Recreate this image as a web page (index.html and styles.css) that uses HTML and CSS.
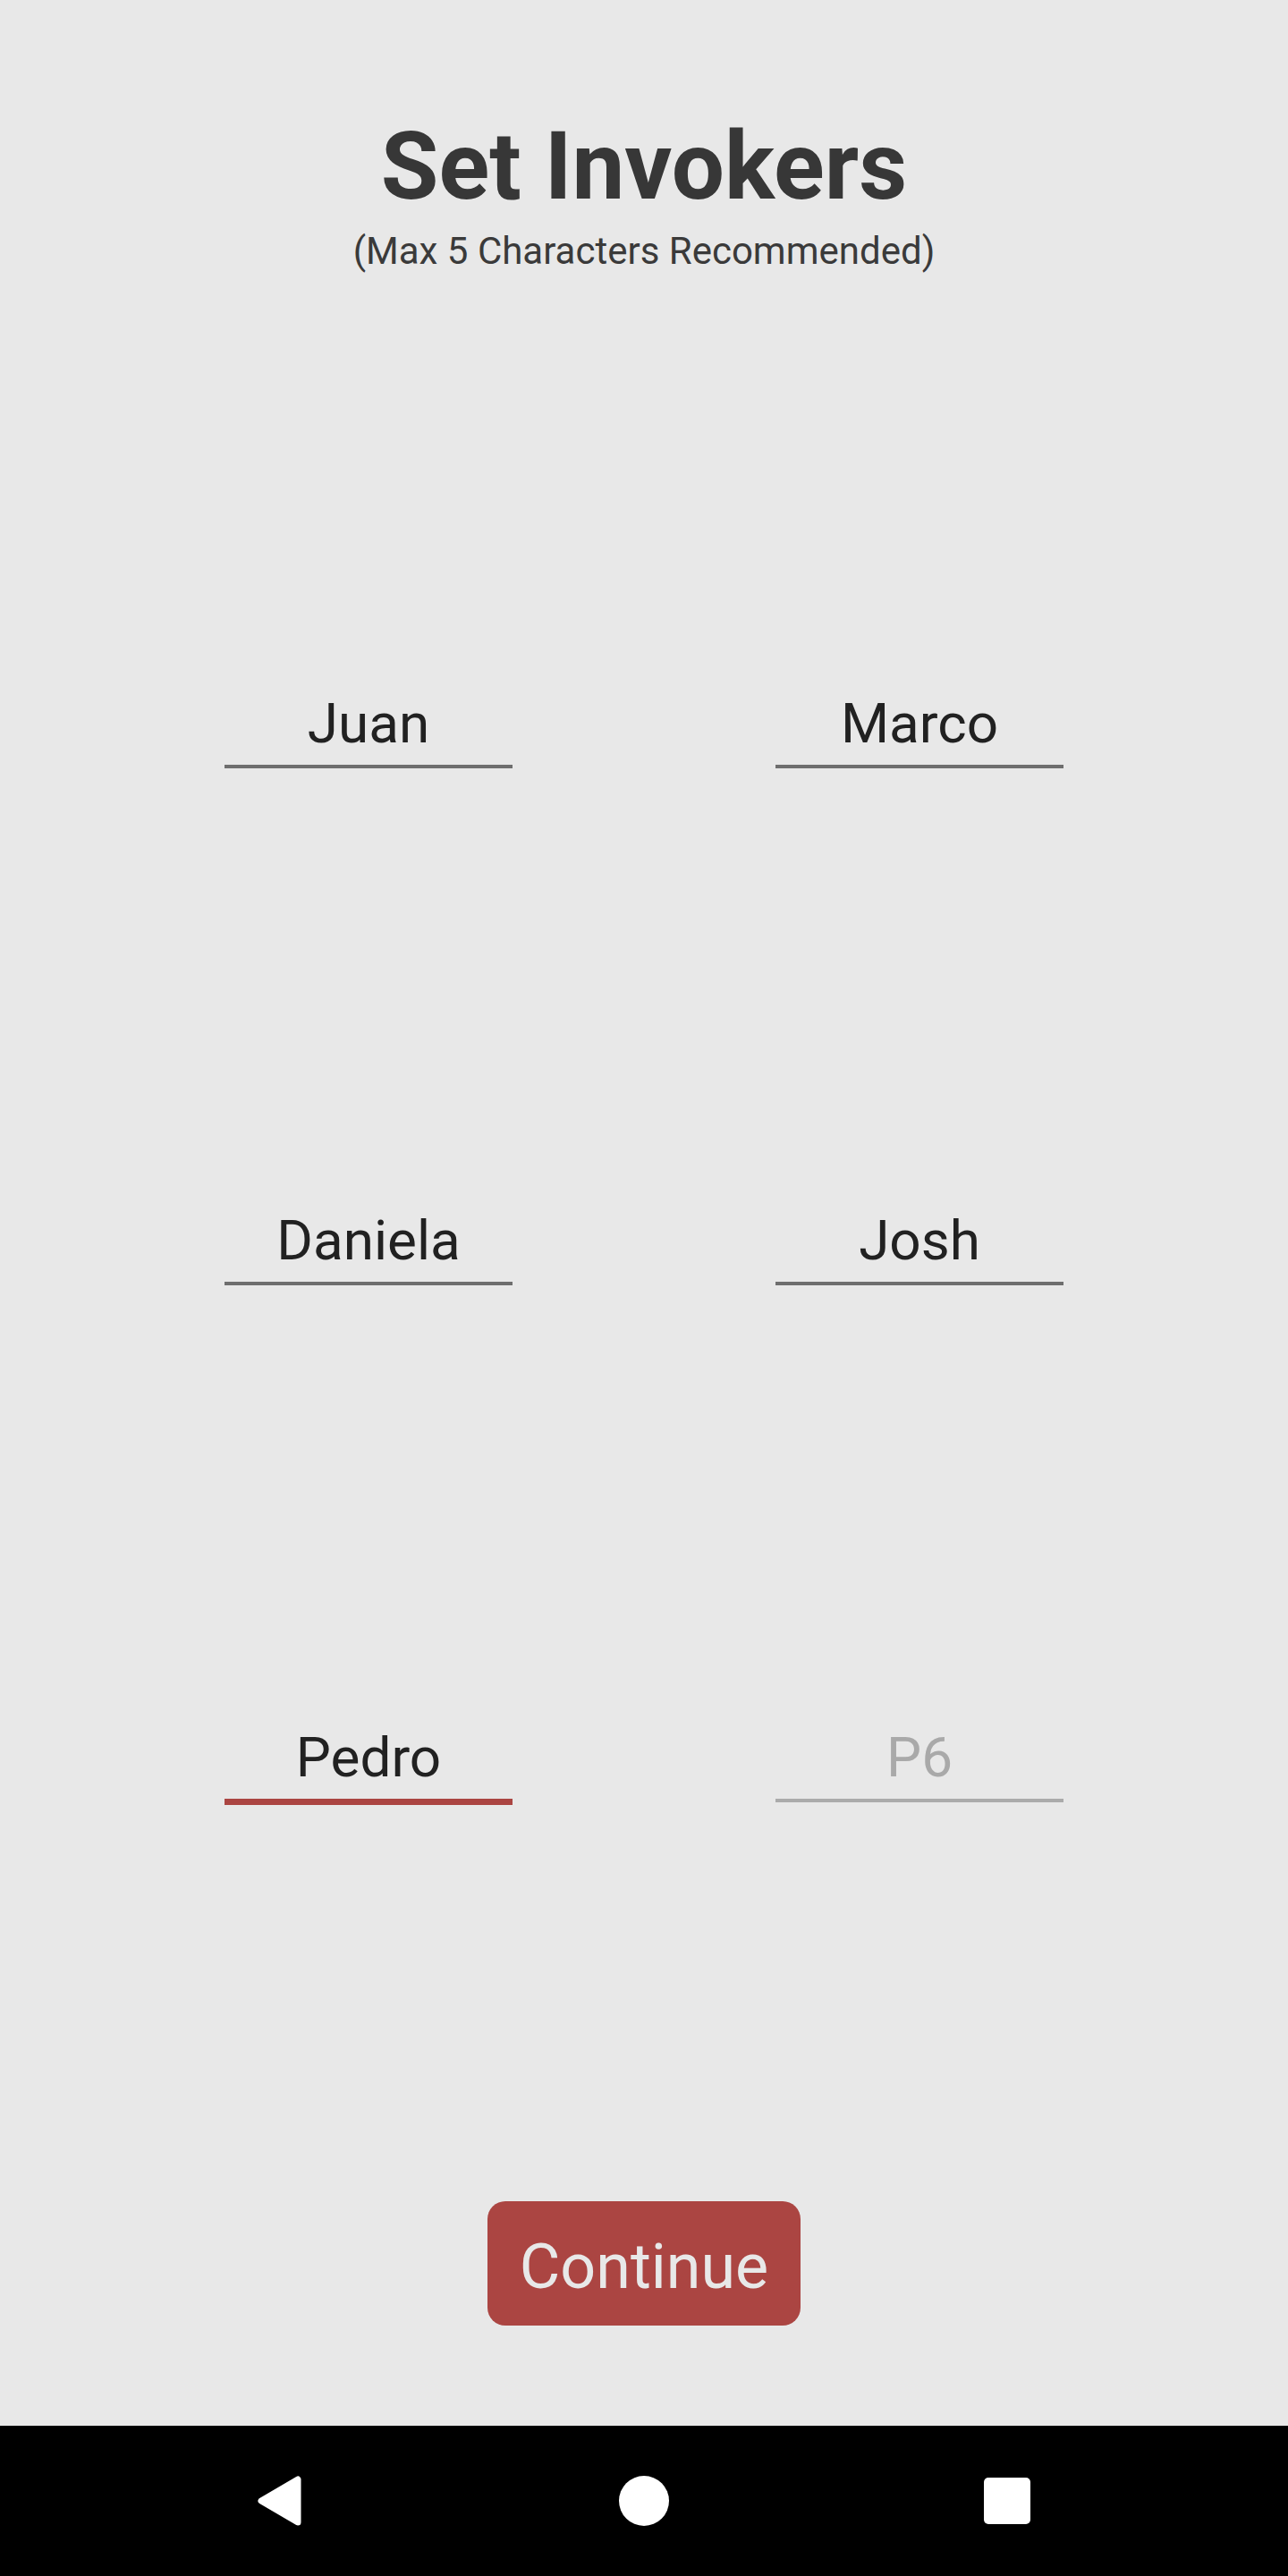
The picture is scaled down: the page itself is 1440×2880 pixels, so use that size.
FILE: index.html
```html
<!DOCTYPE html>
<html lang="en">
<head>
<meta charset="utf-8">
<title>Set Invokers</title>
<link rel="stylesheet" href="styles.css">
</head>
<body>
<div class="screen">
  <main class="content">
    <header class="header">
      <h1 class="title">Set Invokers</h1>
      <p class="subtitle">(Max 5 Characters Recommended)</p>
    </header>
    <section class="fields">
      <div class="field"><span class="value">Juan</span></div>
      <div class="field"><span class="value">Marco</span></div>
      <div class="field"><span class="value">Daniela</span></div>
      <div class="field"><span class="value">Josh</span></div>
      <div class="field field-focused"><span class="value">Pedro</span></div>
      <div class="field field-empty"><span class="value placeholder">P6</span></div>
    </section>
    <div class="actions">
      <button class="continue-btn" type="button">Continue</button>
    </div>
  </main>
  <nav class="navbar">
    <div class="nav-slot">
      <svg class="nav-back" width="50" height="56" viewBox="0 0 50 56">
        <polygon points="5,28 46,4 46,52" fill="#fff" stroke="#fff" stroke-width="7" stroke-linejoin="round"/>
      </svg>
    </div>
    <div class="nav-slot">
      <span class="nav-home"></span>
    </div>
    <div class="nav-slot">
      <span class="nav-recents"></span>
    </div>
  </nav>
</div>
</body>
</html>
```

FILE: styles.css
```css
html, body {
  margin: 0;
  padding: 0;
}

body {
  background: #e8e8e8;
  font-family: Roboto, "Noto Sans", "Liberation Sans", sans-serif;
}

.screen {
  width: 1440px;
  height: 2880px;
  display: flex;
  flex-direction: column;
}

.content {
  flex: 1;
  display: flex;
  flex-direction: column;
  align-items: center;
}

.header {
  padding-top: 127px;
  text-align: center;
}

.title {
  margin: 0;
  font-size: 105px;
  line-height: 120px;
  font-weight: 700;
  color: #373737;
}

.subtitle {
  margin: 10px 0 0;
  font-size: 42px;
  line-height: 48px;
  font-weight: 400;
  color: #3a3a3a;
}

.fields {
  margin-top: 468px;
  display: grid;
  grid-template-columns: 322px 322px;
  column-gap: 294px;
  row-gap: 492px;
}

.field {
  height: 86px;
  box-sizing: border-box;
  padding-bottom: 10px;
  border-bottom: 4px solid #6e6e6e;
  text-align: center;
}

.field-focused {
  border-bottom: 7px solid #ab4542;
  height: 89px;
  margin-bottom: -3px;
}

.field-empty {
  border-bottom-color: #ababab;
}

.value {
  display: block;
  font-size: 62px;
  line-height: 72px;
  color: #212121;
}

.placeholder {
  color: #a9a9a9;
}

.actions {
  margin-top: 446px;
}

.continue-btn {
  width: 350px;
  height: 139px;
  box-sizing: border-box;
  padding: 8px 0 0;
  border: none;
  border-radius: 20px;
  background: #ab4542;
  color: #e8e8e8;
  font-family: Roboto, "Noto Sans", "Liberation Sans", sans-serif;
  font-size: 70px;
  line-height: 131px;
  font-weight: 400;
}

.navbar {
  height: 168px;
  background: #000;
  display: flex;
  justify-content: center;
  align-items: center;
}

.nav-slot {
  width: 406px;
  display: flex;
  justify-content: center;
  align-items: center;
}

.nav-back {
  display: block;
  margin-right: 4px;
}

.nav-home {
  display: block;
  width: 56px;
  height: 56px;
  border-radius: 50%;
  background: #fff;
}

.nav-recents {
  display: block;
  width: 52px;
  height: 52px;
  border-radius: 5px;
  background: #fff;
}
```
